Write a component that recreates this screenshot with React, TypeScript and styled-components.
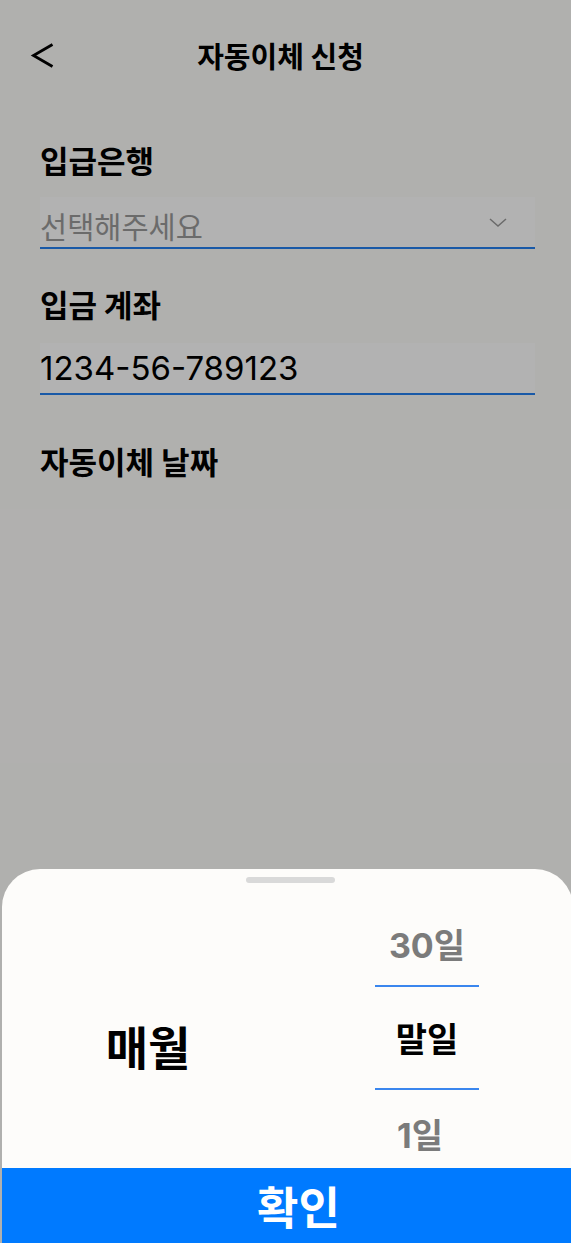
import React from "react";
import styled, { createGlobalStyle } from "styled-components";

const FONT = `Inter, "Noto Sans CJK KR", sans-serif`;

const Global = createGlobalStyle`
  html, body { margin: 0; padding: 0; }
  body {
    width: 571px;
    height: 1243px;
    overflow: hidden;
    background: #fdfcfa;
    font-family: ${FONT};
  }
`;

const Screen = styled.div`
  position: relative;
  width: 571px;
  height: 1243px;
  overflow: hidden;
  background: #fdfcfa;
`;

const Header = styled.header`
  position: relative;
  height: 110px;
  display: flex;
  align-items: center;
  justify-content: center;
  padding-right: 10px;
`;

const BackButton = styled.button`
  position: absolute;
  left: 30px;
  top: 40px;
  width: 26px;
  height: 32px;
  padding: 0;
  border: 0;
  background: transparent;
  display: flex;
`;

const Title = styled.h1`
  margin: 0;
  font-family: "Noto Sans CJK KR", sans-serif;
  font-size: 29px;
  font-weight: 700;
  line-height: 40px;
  color: #000;
`;

const Form = styled.main`
  padding: 0 36px 0 40px;
  display: flex;
  flex-direction: column;
`;

const Label = styled.div<{ $mt?: number }>`
  margin-top: ${(p) => p.$mt ?? 0}px;
  font-family: "Noto Sans CJK KR", sans-serif;
  font-size: 31px;
  font-weight: 700;
  line-height: 40px;
  color: #000;
`;

const Field = styled.div<{ $mt?: number }>`
  margin-top: ${(p) => p.$mt ?? 0}px;
  height: 50px;
  display: flex;
  align-items: center;
  justify-content: space-between;
  border-bottom: 2px solid #2580f0;
  background: #ffffff;
  box-sizing: content-box;
`;

const FieldText = styled.span<{ $placeholder?: boolean }>`
  padding-top: ${(p) => (p.$placeholder ? 6 : 0)}px;
  font-size: ${(p) => (p.$placeholder ? 29.5 : 33)}px;
  font-weight: 400;
  color: ${(p) => (p.$placeholder ? "#9a9a9a" : "#000")};
  font-family: ${(p) => (p.$placeholder ? `"Noto Sans CJK KR", sans-serif` : FONT)};
`;

const Chevron = styled.span`
  margin-right: 28px;
  padding-top: 2px;
  display: flex;
`;

const Dim = styled.div`
  position: absolute;
  inset: 0;
  background: rgba(0, 0, 0, 0.3);
`;

const Sheet = styled.section`
  position: absolute;
  left: 2px;
  bottom: 0;
  width: 571px;
  height: 374px;
  background: #fdfcfa;
  border-radius: 38px 38px 0 0;
  display: flex;
  flex-direction: column;
  overflow: hidden;
`;

const Grabber = styled.div`
  align-self: center;
  margin: 8px 0 0 6px;
  width: 89px;
  height: 6px;
  border-radius: 3px;
  background: #d9d9d9;
`;

const Picker = styled.div`
  flex: 1;
  display: grid;
  grid-template-columns: 292px 1fr;
`;

const LeftCol = styled.div`
  display: flex;
  align-items: center;
  justify-content: center;
  padding-top: 39px;
`;

const Month = styled.span`
  font-family: "Noto Sans CJK KR", sans-serif;
  font-size: 46px;
  font-weight: 700;
  color: #000;
`;

const RightCol = styled.div`
  display: flex;
  flex-direction: column;
  align-items: center;
  padding-right: 13px;
`;

const Item = styled.div<{ $selected?: boolean; $h: number; $pt?: number; $pr?: number }>`
  width: 104px;
  height: ${(p) => p.$h}px;
  padding-top: ${(p) => p.$pt ?? 0}px;
  padding-right: ${(p) => p.$pr ?? 0}px;
  display: flex;
  align-items: center;
  justify-content: center;
  box-sizing: border-box;
  font-family: ${FONT};
  font-size: 34px;
  font-weight: 700;
  color: ${(p) => (p.$selected ? "#000" : "#7b7b7b")};
  border-top: ${(p) => (p.$selected ? "2px solid #3a86ee" : "none")};
  border-bottom: ${(p) => (p.$selected ? "2px solid #3a86ee" : "none")};
`;

const ConfirmButton = styled.button`
  height: 75px;
  width: 100%;
  border: 0;
  padding: 0 0 0 22px;
  background: #007aff;
  color: #fff;
  font-family: "Noto Sans CJK KR", sans-serif;
  font-size: 45px;
  font-weight: 700;
  display: flex;
  align-items: center;
  justify-content: center;
`;

export default function App() {
  return (
    <Screen>
      <Global />
      <Header>
        <BackButton aria-label="back">
          <svg width="26" height="32" viewBox="0 0 26 32">
            <path d="M22.5 4.5 L3.5 15.5 L22.5 26.5" fill="none" stroke="#000" strokeWidth="2.8" />
          </svg>
        </BackButton>
        <Title>자동이체 신청</Title>
      </Header>
      <Form>
        <Label $mt={30}>입급은행</Label>
        <Field $mt={17}>
          <FieldText $placeholder>선택해주세요</FieldText>
          <Chevron>
            <svg width="18" height="10" viewBox="0 0 18 10">
              <path d="M1 1 L9 8 L17 1" fill="none" stroke="#999" strokeWidth="1.5" />
            </svg>
          </Chevron>
        </Field>
        <Label $mt={35}>입금 계좌</Label>
        <Field $mt={19}>
          <FieldText>1234-56-789123</FieldText>
        </Field>
        <Label $mt={46}>자동이체 날짜</Label>
      </Form>
      <Dim />
      <Sheet>
        <Grabber />
        <Picker>
          <LeftCol>
            <Month>매월</Month>
          </LeftCol>
          <RightCol>
            <Item $h={102} $pt={18}>30일</Item>
            <Item $h={105} $selected>말일</Item>
            <Item $h={78} $pt={8} $pr={14}>1일</Item>
          </RightCol>
        </Picker>
        <ConfirmButton>확인</ConfirmButton>
      </Sheet>
    </Screen>
  );
}
